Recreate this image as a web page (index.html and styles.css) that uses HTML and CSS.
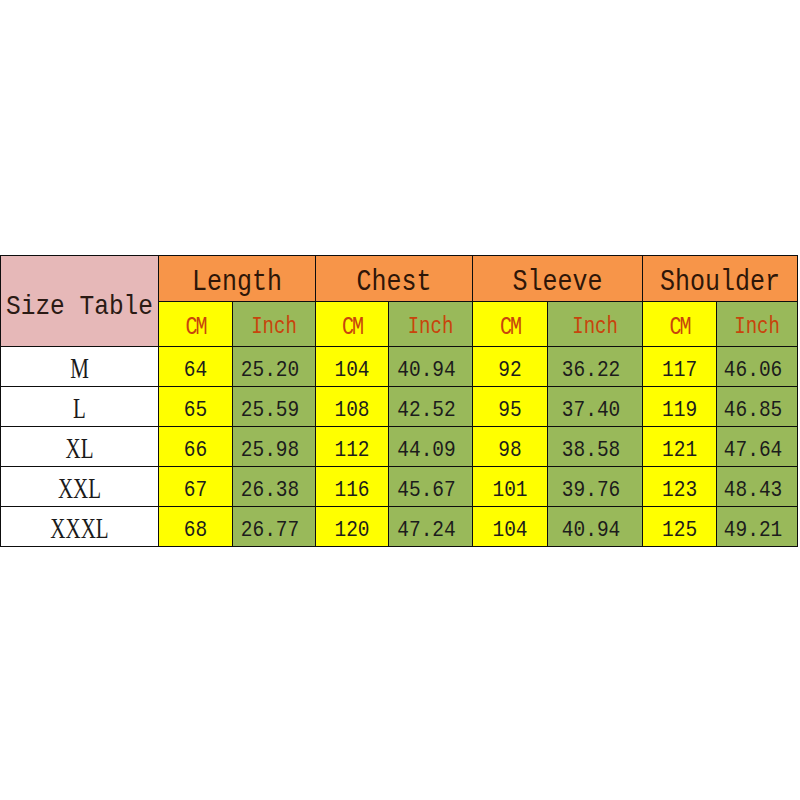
FILE: index.html
```html
<!DOCTYPE html>
<html>
<head>
<meta charset="utf-8">
<link rel="stylesheet" href="styles.css">
</head>
<body>
<div class="page">
<table class="size-table">
  <colgroup>
    <col class="c-size">
    <col class="c-len-cm"><col class="c-len-in">
    <col class="c-che-cm"><col class="c-che-in">
    <col class="c-sle-cm"><col class="c-sle-in">
    <col class="c-sho-cm"><col class="c-sho-in">
  </colgroup>
  <thead>
    <tr class="head1">
      <th class="title" rowspan="2"><span>Size Table</span></th>
      <th class="group" colspan="2"><span>Length</span></th>
      <th class="group" colspan="2"><span>Chest</span></th>
      <th class="group" colspan="2"><span>Sleeve</span></th>
      <th class="group" colspan="2"><span>Shoulder</span></th>
    </tr>
    <tr class="head2">
      <th class="unit cm"><span>CM</span></th><th class="unit in"><span>Inch</span></th>
      <th class="unit cm"><span>CM</span></th><th class="unit in"><span>Inch</span></th>
      <th class="unit cm"><span>CM</span></th><th class="unit in"><span>Inch</span></th>
      <th class="unit cm"><span>CM</span></th><th class="unit in"><span>Inch</span></th>
    </tr>
  </thead>
  <tbody>
    <tr>
      <td class="size"><span>M</span></td>
      <td class="cm"><span>64</span></td><td class="in"><span>25.20</span></td>
      <td class="cm"><span>104</span></td><td class="in"><span>40.94</span></td>
      <td class="cm"><span>92</span></td><td class="in"><span>36.22</span></td>
      <td class="cm"><span>117</span></td><td class="in"><span>46.06</span></td>
    </tr>
    <tr>
      <td class="size"><span>L</span></td>
      <td class="cm"><span>65</span></td><td class="in"><span>25.59</span></td>
      <td class="cm"><span>108</span></td><td class="in"><span>42.52</span></td>
      <td class="cm"><span>95</span></td><td class="in"><span>37.40</span></td>
      <td class="cm"><span>119</span></td><td class="in"><span>46.85</span></td>
    </tr>
    <tr>
      <td class="size"><span>XL</span></td>
      <td class="cm"><span>66</span></td><td class="in"><span>25.98</span></td>
      <td class="cm"><span>112</span></td><td class="in"><span>44.09</span></td>
      <td class="cm"><span>98</span></td><td class="in"><span>38.58</span></td>
      <td class="cm"><span>121</span></td><td class="in"><span>47.64</span></td>
    </tr>
    <tr>
      <td class="size"><span>XXL</span></td>
      <td class="cm"><span>67</span></td><td class="in"><span>26.38</span></td>
      <td class="cm"><span>116</span></td><td class="in"><span>45.67</span></td>
      <td class="cm"><span>101</span></td><td class="in"><span>39.76</span></td>
      <td class="cm"><span>123</span></td><td class="in"><span>48.43</span></td>
    </tr>
    <tr>
      <td class="size"><span>XXXL</span></td>
      <td class="cm"><span>68</span></td><td class="in"><span>26.77</span></td>
      <td class="cm"><span>120</span></td><td class="in"><span>47.24</span></td>
      <td class="cm"><span>104</span></td><td class="in"><span>40.94</span></td>
      <td class="cm"><span>125</span></td><td class="in"><span>49.21</span></td>
    </tr>
  </tbody>
</table>
</div>
</body>
</html>
```
FILE: styles.css
```css
html, body {
  margin: 0;
  padding: 0;
  background: #ffffff;
}

.page {
  width: 800px;
  height: 800px;
  padding-top: 255px;
  box-sizing: border-box;
}

.size-table {
  border-collapse: collapse;
  table-layout: fixed;
  width: 798px;
  font-family: "Liberation Mono", "DejaVu Sans Mono", monospace;
  color: #1c1c1c;
}

.c-size { width: 158px; }
.c-len-cm { width: 74px; }
.c-len-in { width: 83px; }
.c-che-cm { width: 73px; }
.c-che-in { width: 84px; }
.c-sle-cm { width: 75px; }
.c-sle-in { width: 95px; }
.c-sho-cm { width: 74px; }
.c-sho-in { width: 81px; }

.size-table th,
.size-table td {
  border: 1px solid #0d0d0d;
  padding: 0;
  text-align: center;
  vertical-align: middle;
  font-weight: normal;
  white-space: nowrap;
  overflow: hidden;
}

.size-table span {
  display: inline-block;
}

.head1 { height: 46px; }
.head2 { height: 45px; }
.size-table tbody tr { height: 40px; }

.title {
  background: #e6b8b8;
  font-size: 24.5px;
  color: #2a1a14;
}
.title span {
  transform: scaleY(1.15);
  padding-top: 8px;
}

.group {
  background: #f79549;
  font-size: 25px;
  color: #2e1608;
}
.group span {
  transform: scaleY(1.15);
  padding-top: 7px;
}

.unit {
  font-size: 19px;
  color: #c8440c;
}
.unit span {
  transform: scaleY(1.25);
  padding-top: 4px;
}
.unit.cm span {
  font-size: 20px;
  letter-spacing: -2px;
}

.cm { background: #ffff00; }
.in { background: #99b95a; }

td.cm, td.in {
  font-size: 19.5px;
}
td.cm span, td.in span {
  transform: scaleY(1.15);
  padding-top: 6px;
}
td.in span {
  margin-right: 8px;
}

.size {
  background: #ffffff;
  font-family: "Liberation Serif", "DejaVu Serif", serif;
  font-size: 21px;
  color: #1a1a1a;
}
.size span {
  transform: scaleY(1.38);
  padding-top: 4px;
}
```
